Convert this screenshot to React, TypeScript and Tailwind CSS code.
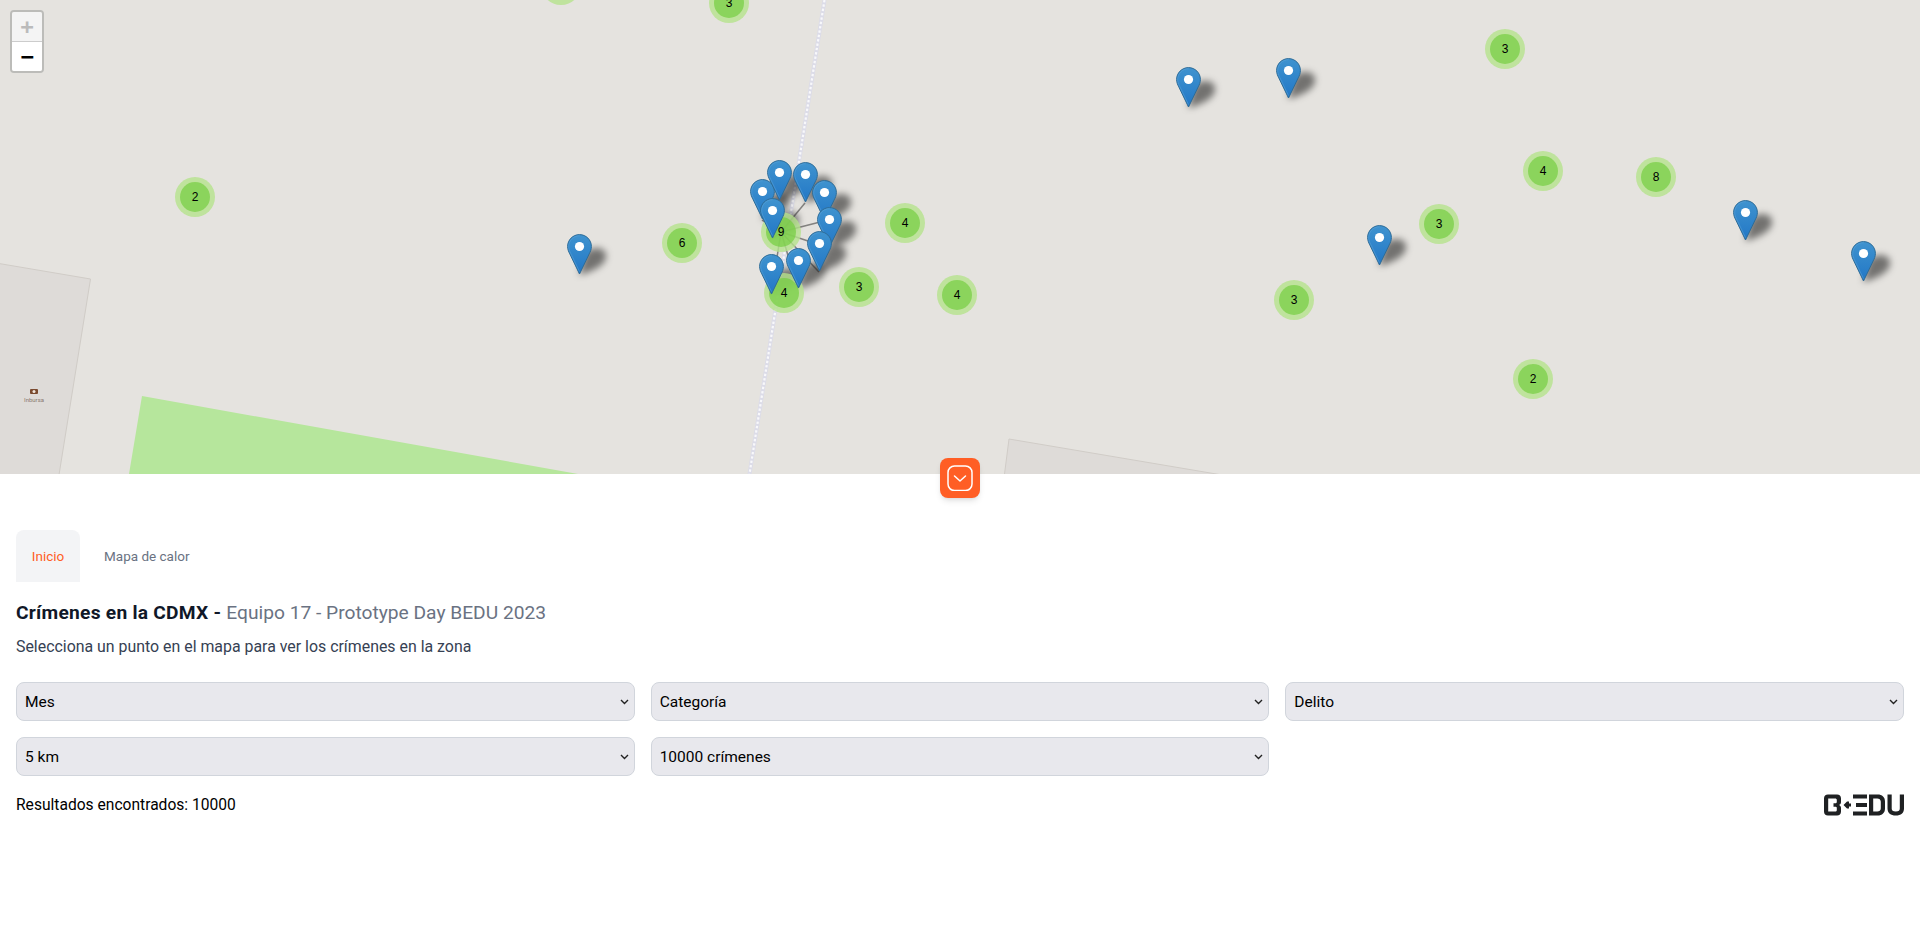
import React from "react";

const clusters: [number, number, number][] = [
  [561, -15, 5],
  [729, 3, 3],
  [1505, 49, 3],
  [195, 197, 2],
  [1543, 171, 4],
  [1656, 177, 8],
  [1439, 224, 3],
  [1294, 300, 3],
  [1533, 379, 2],
  [905, 223, 4],
  [859, 287, 3],
  [957, 295, 4],
  [682, 243, 6],
  [781, 232, 9],
  [784, 293, 4],
];

const spider: [number, number][] = [
  [762, 220],
  [779, 201],
  [805, 203],
  [824, 221],
  [772, 239],
  [829, 248],
  [819, 272],
  [771, 295],
  [798, 289],
];

const pins: [number, number][] = [
  [1188, 108],
  [1288, 99],
  [579, 275],
  [1379, 266],
  [1745, 241],
  [1863, 282],
  ...spider,
];

function Pin({ x, y }: { x: number; y: number }) {
  return (
    <svg
      className="absolute"
      width="25"
      height="41"
      viewBox="0 0 25 41"
      style={{ left: x - 12, top: y - 41 }}
    >
      <path
        d="M12.5.6C5.9.6.6 5.9.6 12.5c0 2.900 1 5.100 2.200 7.400L12.500 40l9.700-20.100c1.200-2.300 2.200-4.500 2.200-7.400C24.400 5.900 19.100.6 12.500.6z"
        fill="url(#pinFill)"
        stroke="#2e6c97"
        strokeWidth="1"
      />
      <path
        d="M12.500 1.700C6.500 1.700 1.700 6.500 1.700 12.500c0 2.600.9 4.600 2 6.800l8.800 18.300"
        fill="none"
        stroke="#5ea6dc"
        strokeOpacity="0.5"
        strokeWidth="1"
      />
      <circle cx="12.500" cy="12.500" r="4.600" fill="#fff" />
    </svg>
  );
}

function Cluster({ x, y, n }: { x: number; y: number; n: number }) {
  return (
    <div
      className="absolute flex h-10 w-10 items-center justify-center rounded-full bg-[rgba(181,226,140,0.8)]"
      style={{ left: x - 20, top: y - 20 }}
    >
      <div className="flex h-[30px] w-[30px] items-center justify-center rounded-full bg-[rgba(110,204,57,0.65)] font-['Liberation_Sans',sans-serif] text-xs text-black">
        {n}
      </div>
    </div>
  );
}

function MapCanvas() {
  return (
    <svg className="absolute inset-0" width="1920" height="474" viewBox="0 0 1920 474">
      <defs>
        <linearGradient id="pinFill" x1="0" y1="0" x2="0" y2="1" gradientUnits="objectBoundingBox">
          <stop offset="0" stopColor="#3f93cf" />
          <stop offset="1" stopColor="#2277c6" />
        </linearGradient>
        <filter id="shadowBlur" x="-50%" y="-50%" width="200%" height="200%">
          <feGaussianBlur stdDeviation="3.6" />
        </filter>
      </defs>
      <polygon points="-4,263 90.5,279 58.5,478 -4,478" fill="#dedbd8" stroke="#d0ccc7" strokeWidth="1" />
      <polygon points="142,396 129,474 578,474" fill="#b6e69c" />
      <polygon points="1009,439 1004,478 1240,478" fill="#dedbd8" stroke="#d0ccc7" strokeWidth="1" />
      <line x1="824.5" y1="0" x2="749.5" y2="474" stroke="#dcdce8" strokeWidth="4" />
      <line x1="824.5" y1="0" x2="749.5" y2="474" stroke="#ffffff" strokeOpacity="0.8" strokeWidth="2.2" strokeDasharray="2.4 2" />
      <rect x="30" y="389" width="8" height="5" rx="1" fill="#7a4a2f" />
      <circle cx="34" cy="391.5" r="1.5" fill="#efe6dc" />
      {pins.map(([x, y], i) => (
        <path
          key={i}
          transform={`translate(${x} ${y})`}
          d="M0 0 L6 -22 C14 -30 28 -28 27 -18 C26 -9 12 -3 0 0Z"
          fill="#000"
          fillOpacity="0.5"
          filter="url(#shadowBlur)"
        />
      ))}
      {spider.map(([x, y], i) => (
        <line key={i} x1="781" y1="232" x2={x} y2={y} stroke="#222" strokeOpacity="0.5" strokeWidth="1.5" />
      ))}
    </svg>
  );
}

function BeduLogo() {
  return (
    <svg width="80" height="22" viewBox="0 0 80 22" fill="#1f2123" aria-label="BEDU">
      <path
        fillRule="evenodd"
        d="M4 .5H13C15.500 .5 17 2 17 4.500V8C17 9.500 16.300 10.500 15 11C16.300 11.500 17 12.500 17 14V17.500C17 20 15.500 21.500 13 21.500H4C1.500 21.500 0 20 0 17.500V4.500C0 2 1.500 .5 4 .5ZM4.200 4.500V17.500H11C12.200 17.500 12.800 17 12.800 16V14C12.800 13 12.200 12.800 11 12.800H9.500V9.200H11C12.200 9.200 12.800 9 12.800 8V6C12.800 5 12.200 4.500 11 4.500Z"
      />
      <path d="M19.500 11l3.500-3.500h2v2h2v3h-2v2h-2z" />
      <path d="M29 .5h14v4H29zM32 9h11v4H32zM29 17.500h14v4H29z" />
      <path
        fillRule="evenodd"
        d="M45 .5h8.500c4.800 0 7.500 2.700 7.500 7v7c0 4.300-2.700 7-7.500 7H45zM49.200 4.500V17.500h4c2 0 3.600-1.200 3.600-3.300V7.800c0-2.100-1.600-3.300-3.600-3.300z"
      />
      <path d="M63.500.5h4.200V14.500c0 2 1.100 3 4.100 3s4-1 4-3V.5H80V14.500c0 4.600-3 7-8.200 7s-8.300-2.400-8.300-7z" />
    </svg>
  );
}

function Field({ value }: { value: string }) {
  return (
    <div className="relative">
      <select
        className="h-[39px] w-full appearance-none rounded-lg border border-gray-300 bg-[#e8e8ed] px-2 pt-[2px] font-['Roboto',sans-serif] text-[15.5px] text-black"
        defaultValue={value}
      >
        <option>{value}</option>
      </select>
      <svg
        className="pointer-events-none absolute right-[6px] top-[17px]"
        width="9"
        height="6"
        viewBox="0 0 9 6"
        fill="none"
        stroke="#222"
        strokeWidth="1.4"
      >
        <path d="M1 1l3.500 3.500L8 1" />
      </svg>
    </div>
  );
}

export default function App() {
  return (
    <div className="min-h-[947px] bg-white font-['Roboto',sans-serif] text-gray-900">
      <div className="relative h-[474px] w-full overflow-visible">
        <div className="absolute inset-0 overflow-hidden bg-[#e5e3df]">
          <MapCanvas />
          <div className="absolute left-[24px] top-[395px] text-[6px] leading-[9px] text-[#8a7a70]">Inbursa</div>
          {clusters.map(([x, y, n], i) => (
            <Cluster key={i} x={x} y={y} n={n} />
          ))}
          {pins.map(([x, y], i) => (
            <Pin key={i} x={x} y={y} />
          ))}
        </div>
        <div className="absolute left-[10px] top-[10px] w-[34px] overflow-hidden rounded border-2 border-[#bcbcb9] bg-clip-padding font-['DejaVu_Sans_Mono',monospace] text-[22px] font-bold">
          <div className="flex h-[30px] items-center justify-center border-b border-[#ccc] bg-[#f4f4f4] text-[#bbb]">+</div>
          <div className="flex h-[29px] items-center justify-center bg-white text-black">−</div>
        </div>
        <button className="absolute left-[940px] top-[458px] flex h-10 w-10 items-center justify-center rounded-lg bg-[#ff5e25] shadow-md">
          <svg width="26" height="26" viewBox="0 0 26 26" fill="none" stroke="#fff" strokeWidth="1.5" strokeLinecap="round" strokeLinejoin="round">
            <rect x="1" y="1" width="24" height="24.500" rx="6.500" />
            <path d="M7.500 11l5.500 5 5.500-5" />
          </svg>
        </button>
      </div>

      <div className="px-4 pt-14">
        <ul className="flex gap-2 text-[13.5px] leading-5">
          <li className="w-16 rounded-t-lg bg-gray-100 py-4 text-center text-[#ff5e25]">Inicio</li>
          <li className="p-4 text-gray-500">Mapa de calor</li>
        </ul>
        <h1 className="mt-[17px] text-[19.2px] leading-7">
          <span className="font-bold tracking-[0.25px] text-gray-900">Crímenes en la CDMX - </span>
          <span className="text-gray-500">Equipo 17 - Prototype Day BEDU 2023</span>
        </h1>
        <p className="mt-2 text-[15.9px] leading-6 text-gray-700">Selecciona un punto en el mapa para ver los crímenes en la zona</p>
        <div className="mt-[23px] grid grid-cols-3 gap-4">
          <Field value="Mes" />
          <Field value="Categoría" />
          <Field value="Delito" />
          <Field value="5 km" />
          <Field value="10000 crímenes" />
        </div>
        <div className="mt-[17px] flex items-center justify-between">
          <span className="text-[15.6px] leading-6 text-black">Resultados encontrados: 10000</span>
          <BeduLogo />
        </div>
      </div>
    </div>
  );
}
